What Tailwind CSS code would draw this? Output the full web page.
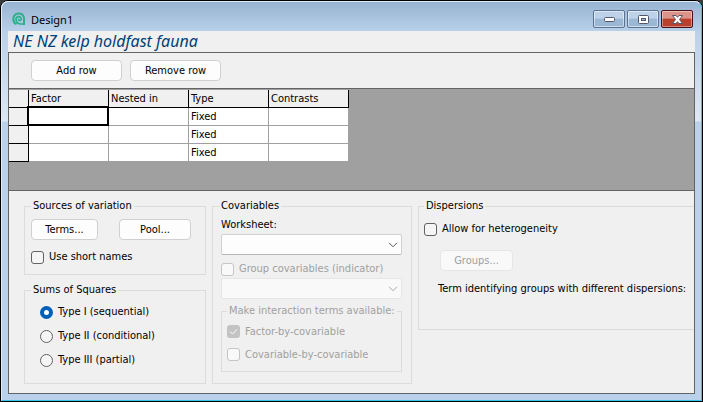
<!DOCTYPE html>
<html lang="en">
<head>
  <meta charset="UTF-8" />
  <meta name="viewport" content="width=device-width, initial-scale=1.0" />
  <title>Design1</title>
  <script src="https://cdn.jsdelivr.net/npm/@tailwindcss/browser@4"></script>
</head>
<body class="bg-[#3a3a3a]">
  <div class="flex min-h-screen flex-col rounded-t-lg border border-black bg-[#b9d1ea] font-['DejaVu_Sans_Condensed','DejaVu_Sans',sans-serif] text-[11px] leading-[14px] font-stretch-condensed text-black">
    <div class="flex grow flex-col rounded-t-[7px] border border-t-[#dfe9f4] border-r-[#35c8e8] border-b-[#35c8e8] border-l-[#e4eef8] bg-[linear-gradient(to_bottom,#98b4d2,#b9d1ea_30px,#dce8f5_119px,#b9d1ea_120px)] px-[6px] pb-[6px]">

      <!-- title bar -->
      <header class="flex h-[29px] items-center pt-[5px] pr-[2px] pl-1">
        <svg class="h-[14px] w-[14px]" viewBox="0 0 14 14" fill="none" stroke="#2bb08c" stroke-width="2">
          <path d="M4.500 12 C0 10.500 0 2 6.500 1.500 C11 1.300 12.300 4.500 12 8 V13" />
          <path d="M12 12 H8.500 C4 12 2.800 6.500 5.500 4.800 C8.300 3.700 10.300 7 8.300 8.300 C7.200 8.800 6.300 7.900 6.900 7" stroke-width="1.700" />
        </svg>
        <h1 class="ml-[5px] grow pt-px font-['Noto_Sans','Open_Sans',sans-serif] text-[11px] leading-4 font-stretch-normal">Design1</h1>
        <div class="flex gap-[2px]">
          <button aria-label="Minimize" class="flex h-[18px] w-8 items-center justify-center rounded-xs border border-[#5d7390] bg-linear-to-b from-[#bdd2e8] from-45% to-[#9ab7d4] to-50% inset-ring inset-ring-white/50">
            <svg class="h-[5px] w-[11px]" viewBox="0 0 11 5"><rect x=".5" y=".5" width="10" height="4" rx="1" fill="#fff" stroke="#535666" /></svg>
          </button>
          <button aria-label="Maximize" class="flex h-[18px] w-8 items-center justify-center rounded-xs border border-[#5d7390] bg-linear-to-b from-[#bdd2e8] from-45% to-[#9ab7d4] to-50% inset-ring inset-ring-white/50">
            <svg class="h-[9px] w-[11px]" viewBox="0 0 11 9"><rect x=".5" y=".5" width="10" height="8" rx="1" fill="#fff" stroke="#535666" /><rect x="3.500" y="3.500" width="4" height="2" fill="#9ab7d4" stroke="#535666" /></svg>
          </button>
          <button aria-label="Close" class="flex h-[18px] w-8 items-center justify-center rounded-xs border border-[#4b1016] bg-linear-to-b from-[#dc9488] from-45% to-[#b8402c] to-50% inset-ring inset-ring-white/40">
            <svg class="h-[9px] w-[11px]" viewBox="0 0 11 9"><path d="M.5.5H4L5.500 2.300 7 .5H10.500L7.500 4.500 10.500 8.500H7L5.500 6.700 4 8.500H.5L3.500 4.500Z" fill="#fff" stroke="#535666" /></svg>
          </button>
        </div>
      </header>

      <main class="flex grow flex-col bg-[#f0f0f0]">
        <h2 class="h-[21px] pl-[5px] font-['Noto_Sans','Open_Sans',sans-serif] text-[16px] leading-5 text-[#004078] italic">NE NZ kelp holdfast fauna</h2>

        <div class="flex grow flex-col border border-[#646464]">
          <div class="flex h-9 items-center gap-2 border-b border-[#646464] pl-[22px]">
            <button class="h-[21px] w-[91px] rounded border border-[#d0d0d0] bg-[#fdfdfd]">Add row</button>
            <button class="h-[21px] w-[91px] rounded border border-[#d0d0d0] bg-[#fdfdfd]">Remove row</button>
          </div>

          <!-- design grid -->
          <div class="border-b border-[#646464] bg-[#a0a0a0] pt-px pb-7">
            <table class="w-[340px] table-fixed border-separate border-spacing-0 text-left">
              <thead>
                <tr class="h-[18px] *:border-r *:border-b *:border-black *:bg-[#f0f0f0] *:p-0 *:pt-px *:pl-[2px] *:font-normal">
                  <th class="w-5"></th>
                  <th scope="col">Factor</th>
                  <th scope="col">Nested in</th>
                  <th scope="col">Type</th>
                  <th scope="col">Contrasts</th>
                </tr>
              </thead>
              <tbody class="bg-white">
                <tr class="h-[18px]">
                  <th class="border-r border-b border-black bg-[#f0f0f0]"></th>
                  <td class="relative border-r-2 border-b-2 border-black p-0 shadow-[-1px_-1px_0_1px_#000]"><input type="text" aria-label="Factor" class="block h-4 w-full px-[2px] outline-none" /></td>
                  <td class="border-r border-b border-[#a0a0a0]"></td>
                  <td class="border-r border-b border-[#a0a0a0] p-0 pl-[2px]">Fixed</td>
                  <td class="border-r border-b border-[#a0a0a0]"></td>
                </tr>
                <tr class="h-[18px]">
                  <th class="border-r border-b border-black bg-[#f0f0f0]"></th>
                  <td class="border-r border-b border-[#a0a0a0]"></td>
                  <td class="border-r border-b border-[#a0a0a0]"></td>
                  <td class="border-r border-b border-[#a0a0a0] p-0 pl-[2px]">Fixed</td>
                  <td class="border-r border-b border-[#a0a0a0]"></td>
                </tr>
                <tr class="h-[18px]">
                  <th class="border-r border-b border-black bg-[#f0f0f0]"></th>
                  <td class="border-r border-b border-[#a0a0a0]"></td>
                  <td class="border-r border-b border-[#a0a0a0]"></td>
                  <td class="border-r border-b border-[#a0a0a0] p-0 pl-[2px]">Fixed</td>
                  <td class="border-r border-b border-[#a0a0a0]"></td>
                </tr>
              </tbody>
            </table>
          </div>

          <!-- options -->
          <div class="flex items-start gap-[6px] pt-2 pb-[8px] pl-[15px] whitespace-nowrap">
            <div class="flex w-[182px] shrink-0 flex-col gap-2">
              <fieldset class="border border-[#dcdcdc] px-[6px] pb-[10px]">
                <legend class="px-[2px]">Sources of variation</legend>
                <div class="mt-[6px] flex gap-[21px]">
                  <button class="h-[21px] w-[67px] rounded border border-[#d0d0d0] bg-[#fdfdfd]">Terms...</button>
                  <button class="h-[21px] w-[72px] rounded border border-[#d0d0d0] bg-[#fdfdfd]">Pool...</button>
                </div>
                <label class="mt-[10px] flex items-center gap-[5px]">
                  <input type="checkbox" class="h-[13px] w-[13px] appearance-none rounded-[3px] border border-[#626262] bg-[#f5f5f5]" />
                  Use short names
                </label>
              </fieldset>

              <fieldset class="border border-[#dcdcdc] px-[6px] pb-[11px]">
                <legend class="px-[2px]">Sums of Squares</legend>
                <div class="mt-[3px] pl-[9px]">
                  <label class="flex h-6 items-center gap-[5px]">
                    <input type="radio" name="ss" checked class="h-[13px] w-[13px] appearance-none rounded-full border border-[#626262] bg-[#f5f5f5] checked:border-4 checked:border-[#005fb8] checked:bg-white" />
                    Type I (sequential)
                  </label>
                  <label class="flex h-6 items-center gap-[5px]">
                    <input type="radio" name="ss" class="h-[13px] w-[13px] appearance-none rounded-full border border-[#626262] bg-[#f5f5f5] checked:border-4 checked:border-[#005fb8] checked:bg-white" />
                    Type II (conditional)
                  </label>
                  <label class="flex h-6 items-center gap-[5px]">
                    <input type="radio" name="ss" class="h-[13px] w-[13px] appearance-none rounded-full border border-[#626262] bg-[#f5f5f5] checked:border-4 checked:border-[#005fb8] checked:bg-white" />
                    Type III (partial)
                  </label>
                </div>
              </fieldset>
            </div>

            <fieldset class="w-[200px] shrink-0 border border-[#dcdcdc] pr-[9px] pb-[11px] pl-2">
              <legend class="-ml-[2px] px-[2px]">Covariables</legend>
              <label for="worksheet" class="mt-[5px] block">Worksheet:</label>
              <div class="relative mt-[2px]">
                <select id="worksheet" class="block h-[21px] w-full appearance-none rounded-xs border border-[#d0d0d0] border-b-[#b8b8b8] bg-[#fdfdfd]"></select>
                <svg class="pointer-events-none absolute top-2 right-1 h-[6px] w-[10px]" viewBox="0 0 10 6" fill="none" stroke="#5a5a5a"><path d="M1 .8 5 4.800 9 .8" /></svg>
              </div>
              <label class="mt-[7px] flex items-center gap-[5px] text-[#a0a0a0]">
                <input type="checkbox" disabled class="h-[13px] w-[13px] appearance-none rounded-[3px] border border-[#c5c5c5] bg-[#f9f9f9]" />
                Group covariables (indicator)
              </label>
              <div class="relative mt-[2px]">
                <select aria-label="Indicator" disabled class="block h-[21px] w-full appearance-none rounded-xs border border-[#e6e6e6] bg-[#f9f9f9]"></select>
                <svg class="pointer-events-none absolute top-2 right-1 h-[6px] w-[10px]" viewBox="0 0 10 6" fill="none" stroke="#a8a8a8"><path d="M1 .8 5 4.800 9 .8" /></svg>
              </div>
              <fieldset disabled class="mt-[5px] border border-[#dcdcdc] pr-[3px] pb-[5px] pl-[5px] text-[#a0a0a0]">
                <legend class="px-[2px]">Make interaction terms available:</legend>
                <label class="mt-[2px] flex h-[23px] items-center gap-[5px]">
                  <span class="relative flex">
                    <input type="checkbox" checked disabled class="h-[13px] w-[13px] appearance-none rounded-[3px] bg-[#c3c3c3]" />
                    <svg class="absolute top-0 left-0 h-[13px] w-[13px]" viewBox="0 0 13 13" fill="none" stroke="#fff"><path d="M3 6.500 5.500 9 10 4.500" /></svg>
                  </span>
                  Factor-by-covariable
                </label>
                <label class="flex h-[23px] items-center gap-[5px]">
                  <input type="checkbox" disabled class="h-[13px] w-[13px] appearance-none rounded-[3px] border border-[#c5c5c5] bg-[#f9f9f9]" />
                  Covariable-by-covariable
                </label>
              </fieldset>
            </fieldset>

            <fieldset class="min-w-0 grow border border-r-0 border-[#dcdcdc] px-[5px] pb-[33px]">
              <legend class="px-[2px]">Dispersions</legend>
              <label class="mt-[9px] flex items-center gap-[5px]">
                <input type="checkbox" class="h-[13px] w-[13px] appearance-none rounded-[3px] border border-[#626262] bg-[#f5f5f5]" />
                Allow for heterogeneity
              </label>
              <button disabled class="mt-[14px] ml-4 block h-[21px] w-[73px] rounded border border-[#e6e6e6] bg-[#f9f9f9] text-[#a0a0a0]">Groups...</button>
              <p class="mt-[11px] pl-[14px]">Term identifying groups with different dispersions:</p>
            </fieldset>
          </div>
        </div>
      </main>
    </div>
  </div>
</body>
</html>
